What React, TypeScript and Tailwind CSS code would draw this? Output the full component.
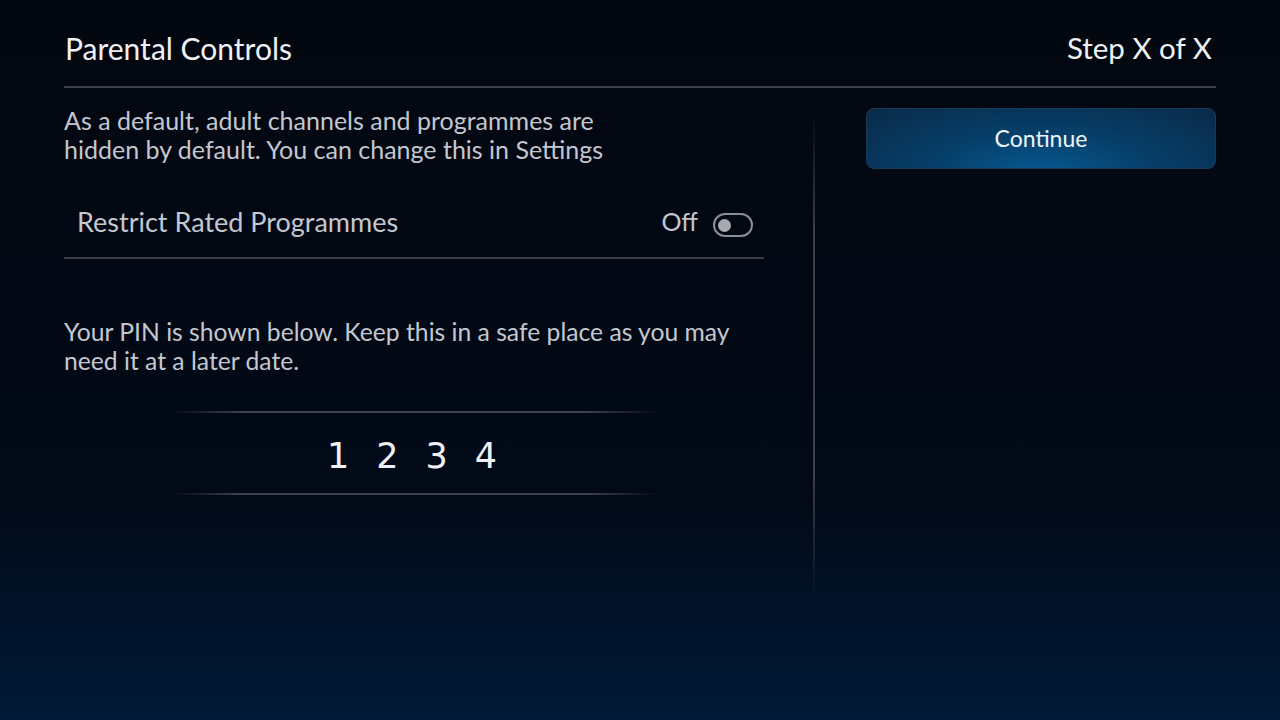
export default function App() {
  return (
    <div
      className="w-[1280px] h-[720px] overflow-hidden text-[#c3c7cf] bg-[linear-gradient(to_bottom,#03070f_0%,#020a18_70%,#001a38_100%)]"
      style={{ fontFamily: "Lato, 'Noto Sans', sans-serif" }}
    >
      <div className="px-16 pt-[28px]">
        {/* header */}
        <div className="flex items-center justify-between h-[40px] pl-px pr-1">
          <h1 className="text-[30px] text-[#eef0f4] leading-none">Parental Controls</h1>
          <span className="text-[29.5px] text-[#eef0f4] leading-none">Step X of X</span>
        </div>
        <div className="h-[2px] bg-[#3a3f4a] mt-[18px]" />

        <div className="flex">
          {/* left column */}
          <div className="w-[700px]">
            <p className="mt-[18px] text-[25px] leading-[29px]">
              As a default, adult channels and programmes are
              <br />
              hidden by default. You can change this in Settings
            </p>

            <div className="flex items-center justify-between h-[72px] pl-[13px] pr-[11px] mt-[23px] border-b-2 border-[#3a3e48]">
              <span className="text-[27px]">Restrict Rated Programmes</span>
              <div className="flex items-center gap-[15px]">
                <span className="text-[25px]">Off</span>
                <div className="mt-[6px] w-[40px] h-[24px] rounded-full border-2 border-[#8a8e96] flex items-center px-[3px]">
                  <div className="w-[13px] h-[13px] rounded-full bg-[#a6a9b0]" />
                </div>
              </div>
            </div>

            <p className="mt-[58px] text-[24.7px] leading-[29px]">
              Your PIN is shown below. Keep this in a safe place as you may
              <br />
              need it at a later date.
            </p>

            <div className="mt-[36px] mx-[106px]">
              <div className="h-[2px] bg-[linear-gradient(to_right,transparent,#3e434d_15%,#3e434d_85%,transparent)]" />
              <div
                className="h-[80px] flex items-center justify-center gap-[27px] text-[35px] text-[#eef0f4] pt-[6px] pr-[4px]"
                style={{ fontFamily: "'DejaVu Sans', sans-serif" }}
              >
                <span>1</span>
                <span>2</span>
                <span>3</span>
                <span>4</span>
              </div>
              <div className="h-[2px] bg-[linear-gradient(to_right,transparent,#3e434d_15%,#3e434d_85%,transparent)]" />
            </div>
          </div>

          {/* divider */}
          <div className="ml-[49px] mt-[22px] w-[2px] h-[490px] bg-[linear-gradient(to_bottom,transparent,#3a3f4a_25%,#3a3f4a_75%,transparent)]" />

          {/* right column */}
          <div className="ml-[51px] flex-1 pt-[20px]">
            <button className="w-full h-[61px] rounded-[8px] text-[23px] text-[#eef3f8] bg-[radial-gradient(ellipse_at_50%_110%,#075a92_0%,#063f6a_45%,#0a2a48_100%)] border border-[#163a5a]">
              Continue
            </button>
          </div>
        </div>
      </div>
    </div>
  );
}
